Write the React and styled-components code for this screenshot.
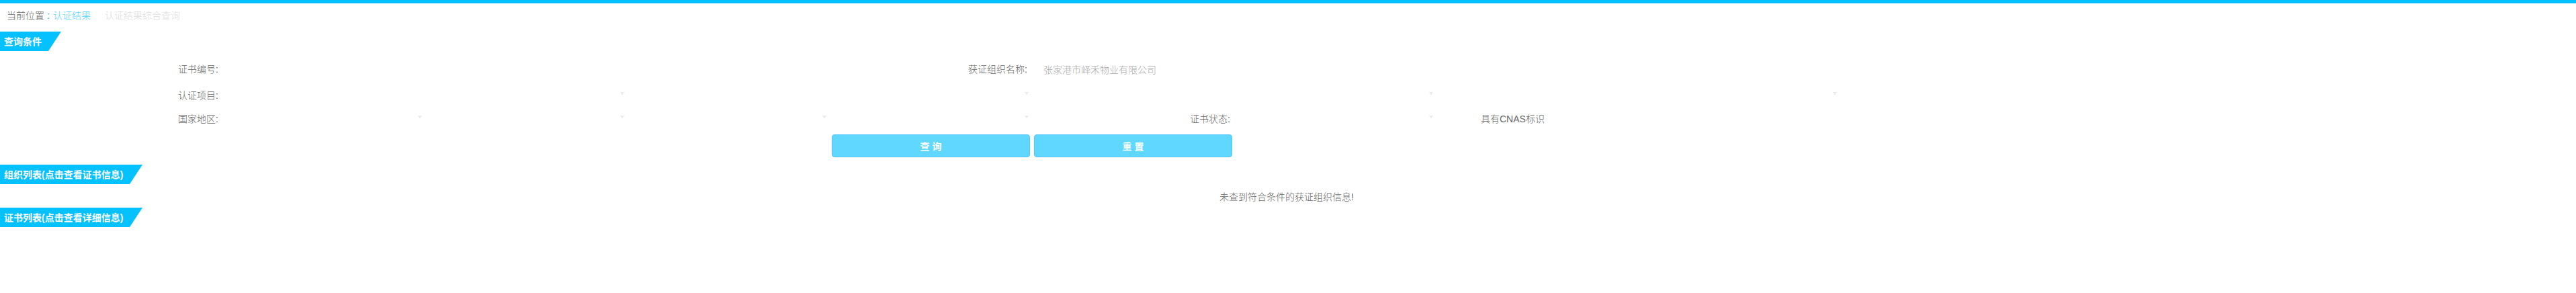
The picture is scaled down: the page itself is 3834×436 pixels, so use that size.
import styled, { createGlobalStyle } from "styled-components";

const GlobalStyle = createGlobalStyle`
  * {
    box-sizing: border-box;
  }

  body {
    margin: 0;
    background: #fff;
    color: #666;
    font-family: "Liberation Sans", "Noto Sans CJK SC", sans-serif;
    font-size: 14px;
    font-weight: 300;
    line-height: 20px;
  }
`;

const Page = styled.div`
  height: 436px;
  border-top: 5px solid #00bfff;
  overflow: hidden;
`;

const Breadcrumb = styled.div`
  display: flex;
  height: 42px;
  padding: 8px 0 0 10px;
`;

const Crumb = styled.span`
  color: ${(props) => props.$color};
  margin-left: ${(props) => props.$gap || 0}px;
`;

const SectionTitle = styled.h2`
  width: ${(props) => props.$width}px;
  height: 29px;
  margin: 0;
  padding-left: 6px;
  background: #06c1ff;
  clip-path: polygon(0 0, 100% 0, calc(100% - 19px) 100%, 0 100%);
  color: #fff;
  font-size: 14px;
  font-weight: bold;
  line-height: 30px;
  white-space: nowrap;
`;

const Form = styled.form`
  height: 169px;
  padding-top: 16px;
`;

const FormRow = styled.div`
  display: flex;
  height: ${(props) => props.$height}px;
  padding-left: 25px;
`;

const Label = styled.label`
  width: 301px;
  padding-right: 1px;
  line-height: 22px;
  text-align: right;
  white-space: nowrap;
`;

const Field = styled.div`
  width: ${(props) => props.$width}px;
  padding-left: 23px;
  color: #aaa;
  line-height: 24px;
`;

const SelectBox = styled.div`
  display: flex;
  justify-content: flex-end;
  width: ${(props) => props.$width || 301}px;
  padding-top: 6px;
`;

const CheckLabel = styled.span`
  margin-left: 71px;
  line-height: 22px;
`;

const Buttons = styled.div`
  display: flex;
  gap: 6px;
  padding-left: 1238px;
`;

const Button = styled.button`
  width: 295px;
  height: 34px;
  padding: 0;
  border: 1px solid #56c4ff;
  border-radius: 4px;
  background: #60d7ff;
  color: #fff;
  font: bold 14px "Liberation Sans", "Noto Sans CJK SC", sans-serif;
`;

const EmptyMessage = styled.div`
  height: 35px;
  padding: 9px 0 0 1815px;
`;

function Arrow() {
    return (
        <svg width="6" height="4" shapeRendering="crispEdges" fill="#ececec">
            <path d="M0 0h6v1H5v1H4v2H2V2H1V1H0z"/>
        </svg>
    )
}

function Select({ width }) {
    return (
        <SelectBox $width={width}>
            <Arrow />
        </SelectBox>
    )
}

export default function App() {
    return (
        <Page>
            <GlobalStyle />
            <Breadcrumb>
                <Crumb $color="#666">当前位置</Crumb>
                <Crumb $color="#00bfff" $gap={4}>:</Crumb>
                <Crumb $color="#55d5ff" $gap={5}>认证结果</Crumb>
                <Crumb $color="#ddd" $gap={21}>认证结果综合查询</Crumb>
            </Breadcrumb>
            <SectionTitle $width={91}>查询条件</SectionTitle>
            <Form>
                <FormRow $height={39}>
                    <Label>证书编号:</Label>
                    <Field $width={903} />
                    <Label>获证组织名称:</Label>
                    <Field $width={600}>张家港市峄禾物业有限公司</Field>
                </FormRow>
                <FormRow $height={35}>
                    <Label>认证项目:</Label>
                    <Select width={603} />
                    <Select width={602} />
                    <Select width={602} />
                    <Select width={601} />
                </FormRow>
                <FormRow $height={34}>
                    <Label>国家地区:</Label>
                    <Select width={302} />
                    <Select />
                    <Select />
                    <Select />
                    <Label>证书状态:</Label>
                    <Select />
                    <CheckLabel>具有CNAS标识</CheckLabel>
                </FormRow>
                <Buttons>
                    <Button type="button">查 询</Button>
                    <Button type="button">重 置</Button>
                </Buttons>
            </Form>
            <SectionTitle $width={212}>组织列表(点击查看证书信息)</SectionTitle>
            <EmptyMessage>未查到符合条件的获证组织信息!</EmptyMessage>
            <SectionTitle $width={212}>证书列表(点击查看详细信息)</SectionTitle>
        </Page>
    )
}
